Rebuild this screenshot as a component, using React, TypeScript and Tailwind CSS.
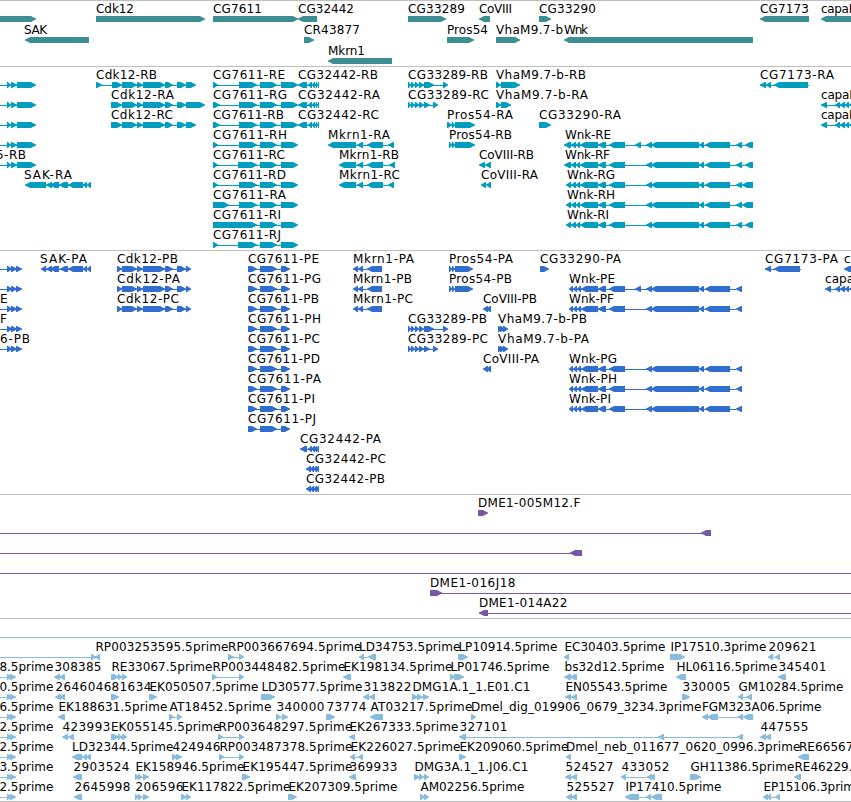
type Dir = "R" | "L";
type Block = [number, number];

interface Feature {
  row: number;
  dir: Dir;
  blocks: Block[];
  label?: string;
  // left and right edge of the label
  at?: [number, number];
  // connector, when it reaches past the blocks
  line?: [number, number];
}

const WIDTH = 851;

// "96-102 112-122" -> [[96, 102], [112, 122]]
const parse = (s: string): Block[] =>
  s
    .split(" ")
    .filter(Boolean)
    .map((p) => p.split("-").map(Number) as Block);

const f = (
  row: number,
  dir: Dir,
  blocks: string,
  label?: string,
  x1?: number,
  x2?: number,
  line?: [number, number],
): Feature => ({
  row,
  dir,
  blocks: parse(blocks),
  label,
  at: x1 !== undefined && x2 !== undefined ? [x1, x2] : undefined,
  line,
});

const genes: Feature[] = [
  f(0, "R", "0-36"),
  f(0, "R", "96-205", "Cdk12", 96, 134),
  f(0, "R", "213-298", "CG7611", 213, 262),
  f(0, "L", "298-317", "CG32442", 298, 354),
  f(0, "R", "408-446", "CG33289", 408, 465),
  f(0, "L", "479-490", "CoVIII", 479, 512),
  f(0, "R", "539-551", "CG33290", 539, 596),
  f(0, "L", "760-809", "CG7173", 760, 809),
  f(0, "L", "821-860", "capaR", 821, 857),
  f(1, "L", "25-89", "SAK", 24, 47),
  f(1, "R", "304-314", "CR43877", 304, 360),
  f(1, "R", "447-474", "Pros54", 447, 488),
  f(1, "R", "496-520", "VhaM9.7-b", 496, 563),
  f(1, "L", "564-753", "Wnk", 564, 588),
  f(2, "L", "328-392", "Mkrn1", 328, 365),
];

const cdkTail = "122-137 137-143 143-165 165-173 177-186";
const cgTail = "260-277 281-298";
const cg32442 = "298-307 308-312 312-315 315-317 317-319";
const cg33289 = "408-411 411-415 415-419 419-424";
const wnkA = "571-576 576-580 580-598 598-606 609-625";
const wnkB = "646-652 651-699 699-704 705-730 736-742";
const capaR = "821-827 835-840 840-845 845-849 849-855";

const transcripts: Feature[] = [
  ...[0, 1, 2, 3].map((r) => f(r, "R", "7-11 11-17 17-36", undefined, undefined, undefined, [0, 8])),
  f(4, "R", "7-11 11-17 17-36", "5-RB", -4, 26, [0, 8]),
  f(0, "R", "96-102 112-122 122-137 137-143 143-165 165-173 177-186 186-196", "Cdk12-RB", 96, 157),
  f(1, "R", `111-122 ${cdkTail} 186-205`, "Cdk12-RA", 111, 174),
  f(2, "R", `111-122 ${cdkTail} 186-196`, "Cdk12-RC", 111, 173),
  f(0, "R", `213-218 239-257 ${cgTail}`, "CG7611-RE", 213, 285),
  f(1, "R", `213-220 239-257 ${cgTail}`, "CG7611-RG", 213, 287),
  f(2, "R", `213-220 239-257 ${cgTail}`, "CG7611-RB", 213, 284),
  f(3, "R", `213-218 239-257 ${cgTail}`, "CG7611-RH", 213, 287),
  f(4, "R", `213-218 238-257 ${cgTail}`, "CG7611-RC", 213, 285),
  f(5, "R", `213-218 239-257 ${cgTail}`, "CG7611-RD", 213, 286),
  f(6, "R", `213-229 239-257 ${cgTail}`, "CG7611-RA", 213, 286),
  f(7, "R", `213-257 ${cgTail}`, "CG7611-RI", 213, 281),
  f(8, "R", `213-218 238-257 ${cgTail}`, "CG7611-RJ", 213, 281),
  f(0, "L", cg32442, "CG32442-RB", 298, 378),
  f(1, "L", cg32442, "CG32442-RA", 298, 380),
  f(2, "L", cg32442, "CG32442-RC", 298, 379),
  f(0, "R", `${cg33289} 424-434 443-448`, "CG33289-RB", 408, 488),
  f(1, "R", `${cg33289} 424-430 433-438`, "CG33289-RC", 408, 489),
  f(0, "R", "496-501 501-520", "VhaM9.7-b-RB", 496, 586),
  f(1, "R", "496-501 501-511", "VhaM9.7-b-RA", 496, 588),
  f(0, "L", "760-766 766-771 774-808", "CG7173-RA", 760, 834, [760, 809]),
  f(1, "L", capaR, "capaR-RA", 821, 877),
  f(2, "L", capaR, "capaR-RB", 821, 877),
  f(2, "R", "447-452 452-455 455-475", "Pros54-RA", 447, 513),
  f(2, "R", "539-551", "CG33290-RA", 539, 621),
  f(3, "R", "449-452 452-455 455-475", "Pros54-RB", 449, 512),
  f(3, "L", "328-356 357-363 367-383 388-394", "Mkrn1-RA", 328, 390),
  f(4, "L", "339-356 357-363 367-383 389-395", "Mkrn1-RB", 339, 399),
  f(5, "L", "339-356 357-363 367-383 388-394", "Mkrn1-RC", 339, 400),
  f(4, "L", "479-485 485-491", "CoVIII-RB", 479, 534),
  f(5, "L", "481-486 486-491", "CoVIII-RA", 481, 538),
  f(5, "L", "25-46 46-52 50-59 59-68 68-83 83-87 87-91", "SAK-RA", 24, 72),
  f(3, "L", `564-571 ${wnkA} 635-641 ${wnkB} 745-753`, "Wnk-RE", 565, 611),
  f(4, "L", `564-571 ${wnkA} ${wnkB} 745-753`, "Wnk-RF", 565, 610),
  f(5, "L", `566-571 ${wnkA} ${wnkB} 742-753`, "Wnk-RG", 567, 615),
  f(6, "L", `566-571 ${wnkA} ${wnkB} 742-753`, "Wnk-RH", 567, 615),
  f(7, "L", `566-571 ${wnkA} ${wnkB} 745-753`, "Wnk-RI", 567, 609),
];

const leftCds = "7-12 11-17 16-22";
const cdkCds = "117-122 122-137 137-143 143-165 165-173 177-186 186-191";
const cgCds = "248-257 260-277 281-290";
const mkrnCds = "353-358 358-363 367-382";
const wnkCdsA = "569-573 573-577 577-581 581-598 598-606 609-625";

const proteins: Feature[] = [
  f(0, "R", leftCds, undefined, undefined, undefined, [0, 8]),
  f(1, "R", leftCds, undefined, undefined, undefined, [0, 8]),
  f(2, "R", leftCds, "E", 0, 8, [0, 8]),
  f(3, "R", leftCds, "F", 0, 7, [0, 8]),
  f(4, "R", leftCds, "6-PB", 0, 30, [0, 8]),
  f(0, "L", "41-46 46-52 50-59 60-68 68-83 83-87 87-91", "SAK-PA", 40, 87),
  f(0, "R", cdkCds, "Cdk12-PB", 117, 178),
  f(1, "R", cdkCds, "Cdk12-PA", 117, 180),
  f(2, "R", cdkCds, "Cdk12-PC", 117, 179),
  f(0, "R", cgCds, "CG7611-PE", 248, 319),
  f(1, "R", cgCds, "CG7611-PG", 248, 321),
  f(2, "R", cgCds, "CG7611-PB", 248, 319),
  f(3, "R", cgCds, "CG7611-PH", 248, 321),
  f(4, "R", cgCds, "CG7611-PC", 248, 320),
  f(5, "R", cgCds, "CG7611-PD", 248, 320),
  f(6, "R", cgCds, "CG7611-PA", 248, 321),
  f(7, "R", cgCds, "CG7611-PI", 248, 315),
  f(8, "R", cgCds, "CG7611-PJ", 248, 316),
  f(9, "L", "300-307 308-312 311-315 314-317 316-319", "CG32442-PA", 300, 381),
  f(10, "L", "306-311 310-314 313-317 316-319", "CG32442-PC", 306, 386),
  f(11, "L", "306-311 310-314 313-317 316-319", "CG32442-PB", 306, 385),
  f(0, "L", mkrnCds, "Mkrn1-PA", 353, 414),
  f(1, "L", mkrnCds, "Mkrn1-PB", 353, 412),
  f(2, "L", mkrnCds, "Mkrn1-PC", 353, 413),
  f(0, "R", "449-452 452-455 455-473", "Pros54-PA", 449, 513),
  f(1, "R", "449-452 452-455 455-473", "Pros54-PB", 449, 512),
  f(0, "R", "540-549", "CG33290-PA", 540, 621),
  f(0, "L", "765-771 774-800", "CG7173-PA", 765, 838, [765, 801]),
  f(0, "L", "844-855", "capaR-PB", 844, 902),
  f(1, "L", "825-831 835-840 840-845 845-849 849-855", "capaR-PA", 825, 881),
  f(1, "L", `${wnkCdsA} 635-641 ${wnkB}`, "Wnk-PE", 569, 615),
  f(2, "L", `${wnkCdsA} ${wnkB}`, "Wnk-PF", 569, 614),
  f(5, "L", `${wnkCdsA} ${wnkB}`, "Wnk-PG", 569, 617),
  f(6, "L", `${wnkCdsA} ${wnkB}`, "Wnk-PH", 569, 617),
  f(7, "L", `${wnkCdsA} ${wnkB}`, "Wnk-PI", 569, 611),
  f(2, "L", "483-488 486-491", "CoVIII-PB", 483, 537),
  f(5, "L", "483-488 486-491", "CoVIII-PA", 483, 539),
  f(3, "R", `${cg33289} 424-434 443-448`, "CG33289-PB", 408, 487),
  f(4, "R", `${cg33289} 424-430 433-438`, "CG33289-PC", 408, 488),
  f(3, "R", "498-502 500-505 503-508", "VhaM9.7-b-PB", 498, 587),
  f(4, "R", "498-502 500-505 503-508", "VhaM9.7-b-PA", 498, 589),
];

const clones: Feature[] = [
  f(0, "R", "478-488", "DME1-005M12.F", 477.5, 580),
  f(1, "L", "701-711", undefined, undefined, undefined, [0, 711]),
  f(2, "L", "570-582", undefined, undefined, undefined, [0, 582]),
  f(3, "L", "", undefined, undefined, undefined, [0, WIDTH]),
  f(4, "R", "430-442", "DME1-016J18", 429.5, 515, [430, WIDTH]),
  f(5, "L", "479-488", "DME1-014A22", 478.5, 567, [479, WIDTH]),
];

const ests: Feature[] = [
  f(0, "R", "", undefined, undefined, undefined, [0, WIDTH]),

  f(1, "R", "91-96", undefined, undefined, undefined, [0, 95]),
  f(1, "L", "95-100", "RP003253595.5prime", 95, 228),
  f(1, "R", "228-234 239-244", "RP003667694.5prime", 227.5, 361),
  f(1, "L", "359-364 368-376", "LD34753.5prime", 358.5, 460),
  f(1, "R", "458-468", "LP10914.5prime", 458, 557),
  f(1, "L", "564-569", "EC30403.5prime", 564, 665),
  f(1, "R", "670-685", "IP17510.3prime", 670, 766),
  f(1, "L", "768-773 775-780", "209621", 768, 816),

  f(2, "R", "7-12 10-16", "8.5prime", -1, 53, [0, 8]),
  f(2, "L", "54-60 59-65", "308385", 54, 101),
  f(2, "R", "111-119 118-122 122-127", "RE33067.5prime", 111, 212),
  f(2, "R", "212-217 239-244", "RP003448482.5prime", 212, 345),
  f(2, "L", "343-351", "EK198134.5prime", 343, 452),
  f(2, "R", "450-455 454-464", "LP01746.5prime", 450, 549),
  f(2, "L", "564-571 570-577", "bs32d12.5prime", 564, 664),
  f(2, "L", "676-686", "HL06116.5prime", 676, 777),
  f(2, "L", "778-786", "345401", 778, 826),

  f(3, "R", "7-12 10-16", "0.5prime", -1, 53, [0, 8]),
  f(3, "L", "55-61 59-65", "2646046", 55, 111),
  f(3, "R", "111-119", "81634", 111, 151),
  f(3, "R", "149-157", "EK050507.5prime", 149, 258),
  f(3, "R", "261-275", "LD30577.5prime", 261, 362),
  f(3, "L", "363-369 369-375", "313822", 363, 411),
  f(3, "R", "412-418 417-423 423-429", "DMG1A.1_1.E01.C1", 412, 530),
  f(3, "L", "565-571 571-577", "EN05543.5prime", 565, 667),
  f(3, "R", "682-690", "330005", 682, 730),
  f(3, "L", "738-743 746-752", "GM10284.5prime", 738, 843),

  f(4, "R", "7-12 10-16", "6.5prime", -1, 53, [0, 8]),
  f(4, "L", "58-65", "EK188631.5prime", 58, 167),
  f(4, "R", "169-174 177-182", "AT18452.5prime", 169, 271),
  f(4, "R", "276-281 282-288", "340000", 276, 324),
  f(4, "R", "326-335", "73774", 326, 366),
  f(4, "L", "370-383", "AT03217.5prime", 370, 472),
  f(4, "R", "471-476", "Dmel_dig_019906_0679_3234.3prime", 470.5, 701),
  f(4, "L", "702-708 707-718 738-743 743-753", "FGM323A06.5prime", 701.5, 821),

  f(5, "R", "7-12 10-16", "2.5prime", -1, 53, [0, 8]),
  f(5, "L", "62-68 68-74", "423993", 62, 110),
  f(5, "R", "111-119 118-122 122-127", "EK055145.5prime", 110.5, 220),
  f(5, "R", "218-223 239-244", "RP003648297.5prime", 218, 352),
  f(5, "L", "349-355", "EK267333.5prime", 349, 458),
  f(5, "L", "459-466 658-664 737-743", "327101", 459, 507),
  f(5, "L", "760-766 765-771", "447555", 760, 808),

  f(6, "R", "7-12 10-16", "2.5prime", -1, 53, [0, 8]),
  f(6, "L", "72-82 82-87 86-91", "LD32344.5prime", 71.5, 173),
  f(6, "R", "172-178 176-182", "424946", 172, 220),
  f(6, "R", "219-224 239-244", "RP003487378.5prime", 219, 352),
  f(6, "L", "350-355 358-363", "EK226027.5prime", 350, 460),
  f(6, "R", "459-466", "EK209060.5prime", 459, 568),
  f(6, "L", "566-571", "Dmel_neb_011677_0620_0996.3prime", 565.5, 800),
  f(6, "L", "798-809", "RE66567.5prime", 798.5, 900),

  f(7, "R", "7-12 10-16", "3.5prime", -1, 53, [0, 8]),
  f(7, "L", "73-82", "2903524", 73, 129),
  f(7, "R", "135-139 138-142 143-149", "EK158946.5prime", 135, 244),
  f(7, "R", "242-250", "EK195447.5prime", 242, 352),
  f(7, "L", "349-356", "369933", 349, 397),
  f(7, "R", "414-420 419-424 424-429", "DMG3A.1_1.J06.C1", 414, 528),
  f(7, "L", "565-571 571-577", "524527", 565, 613),
  f(7, "L", "621-626 647-652 650-655", "433052", 621, 669),
  f(7, "R", "690-701", "GH11386.5prime", 690, 794),
  f(7, "L", "794-801", "RE46229.5prime", 794, 895),

  f(8, "R", "7-12 10-16", "2.5prime", -1, 53, [0, 8]),
  f(8, "L", "74-82", "2645998", 74, 130),
  f(8, "R", "135-139 138-142 143-149", "206596", 135, 183),
  f(8, "R", "181-187 186-191", "EK117822.5prime", 181, 290),
  f(8, "R", "288-297", "EK207309.5prime", 288, 397),
  f(8, "R", "420-425 424-429", "AM02256.5prime", 420, 524),
  f(8, "L", "566-572 571-577", "525527", 566, 614),
  f(8, "L", "625-639 646-651 651-662", "IP17410.5prime", 625, 721),
  f(8, "L", "763-768 767-771 775-780", "EP15106.3prime", 763, 862),
];

const tracks = [
  { name: "Genes", features: genes, pitch: 21, nudge: 0, box: "h-[66px]", color: "text-[#3d8e94]" },
  { name: "Transcripts", features: transcripts, pitch: 20, nudge: 0, box: "h-[184px]", color: "text-[#009dbf]" },
  { name: "Proteins", features: proteins, pitch: 20, nudge: 0, box: "h-[244px]", color: "text-[#306dce]" },
  { name: "Clones", features: clones, pitch: 20, nudge: 0.4, box: "h-[124px]", color: "text-[#7758a7]" },
  { name: "ESTs", features: ests, pitch: 20, nudge: 0.4, box: "h-[183px]", color: "text-[#87bcde]" },
];

// block with a rounded-off head, 6px high
function arrow([a, b]: Block, dir: Dir, top: number) {
  const head = Math.min(6, b - a);
  const tip = dir === "R" ? b : a;
  const tail = dir === "R" ? a : b;
  const s = dir === "R" ? -1 : 1;
  const neck = tip + s * (head - 1);
  const mid = tip + s * head * 0.45;
  return `M${tail} ${top}H${neck}L${mid} ${top + 1.2}L${tip} ${top + 2.5}V${top + 3.5}L${mid} ${top + 4.8}L${neck} ${top + 6}H${tail}Z`;
}

function Glyph({ feature, pitch, nudge }: { feature: Feature; pitch: number; nudge: number }) {
  const { row, dir, blocks, label, at, line } = feature;
  const top = 15 + row * pitch;
  const first = blocks[0];
  const last = blocks[blocks.length - 1];
  const start = Math.min(line ? line[0] : WIDTH, first ? first[0] + 1 : WIDTH);
  const stop = Math.max(line ? line[1] : 0, last ? last[0] : 0);

  return (
    <g>
      {(line || blocks.length > 1) && (
        <rect x={start} y={top + 3} width={stop - start} height={1} fill="currentColor" />
      )}
      {blocks.map((b, i) => (
        <path key={i} d={arrow(b, dir, top)} fill="currentColor" />
      ))}
      {label && at && (
        <text x={at[0] + nudge} y={top - 3} textLength={at[1] - at[0]} className="fill-black">
          {label}
        </text>
      )}
    </g>
  );
}

export default function App() {
  return (
    <main className="flex h-[802px] w-[851px] flex-col overflow-hidden border-b border-[#bebebe] bg-white font-['DejaVu_Sans',sans-serif] text-[12px]">
      {tracks.map((t) => (
        <section key={t.name} aria-label={t.name} className={`shrink-0 border-t border-[#bebebe] ${t.box}`}>
          <svg className={`block h-full w-full ${t.color}`}>
            {t.features.map((feature, i) => (
              <Glyph key={i} feature={feature} pitch={t.pitch} nudge={t.nudge} />
            ))}
          </svg>
        </section>
      ))}
    </main>
  );
}
